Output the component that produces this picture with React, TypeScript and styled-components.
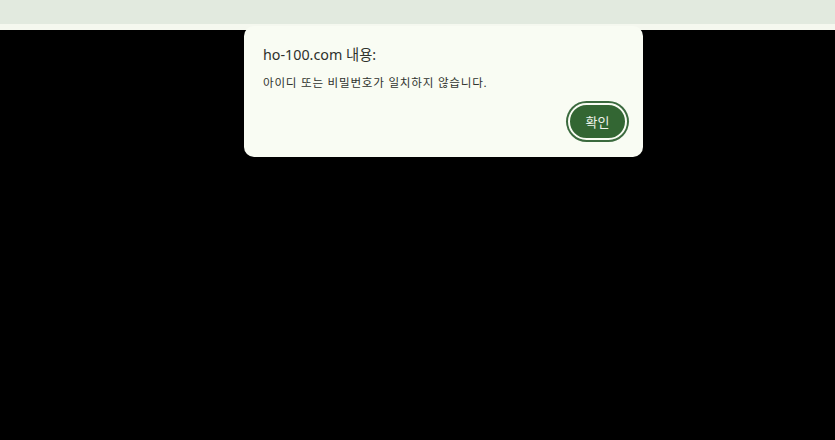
import styled, { createGlobalStyle } from "styled-components";

const GlobalStyle = createGlobalStyle`
	html, body {
		margin: 0;
		padding: 0;
		background: #000;
		font-family: "Noto Sans", "Noto Sans CJK KR", sans-serif;
	}
`;

export default function App() {
	return (
		<>
			<GlobalStyle />
			<Page>
				<TopBar />
				<Strip />
				<Backdrop />
				<Dialog role="alertdialog">
					<Title>ho-100.com 내용:</Title>
					<Message>아이디 또는 비밀번호가 일치하지 않습니다.</Message>
					<Actions>
						<ConfirmButton>확인</ConfirmButton>
					</Actions>
				</Dialog>
			</Page>
		</>
	);
}

const Page = styled.div`
	position: relative;
	width: 835px;
	height: 440px;
	display: flex;
	flex-direction: column;
	overflow: hidden;
	background: #000;
`;

const TopBar = styled.div`
	height: 24px;
	background: #e2eadf;
`;

const Strip = styled.div`
	height: 6px;
	background: #f5f8ef;
`;

const Backdrop = styled.div`
	flex: 1;
	background: #000;
`;

const Dialog = styled.div`
	position: absolute;
	top: 26px;
	left: 244px;
	width: 399px;
	height: 131px;
	box-sizing: border-box;
	padding: 16px 14px 15px 19px;
	background: #f9fcf3;
	border-radius: 10px;
	display: flex;
	flex-direction: column;
`;

const Title = styled.h2`
	margin: 0;
	font-size: 14.3px;
	font-weight: 400;
	line-height: 26px;
	color: #2e312c;
`;

const Message = styled.p`
	margin: 6px 0 0;
	font-size: 11.6px;
	letter-spacing: 0.75px;
	line-height: 18px;
	color: #30332e;
`;

const Actions = styled.div`
	display: flex;
	justify-content: flex-end;
	margin-top: 11px;
`;

const ConfirmButton = styled.button`
	width: 59px;
	height: 37px;
	box-sizing: border-box;
	border-radius: 19px;
	border: 2px solid #f9fcf3;
	box-shadow: 0 0 0 2px #3b6a3e;
	background: #336633;
	color: #eef3ea;
	font-family: "Noto Sans", "Noto Sans CJK KR", sans-serif;
	font-size: 13px;
	padding: 0;
	margin-right: 2px;
	cursor: pointer;
`;
